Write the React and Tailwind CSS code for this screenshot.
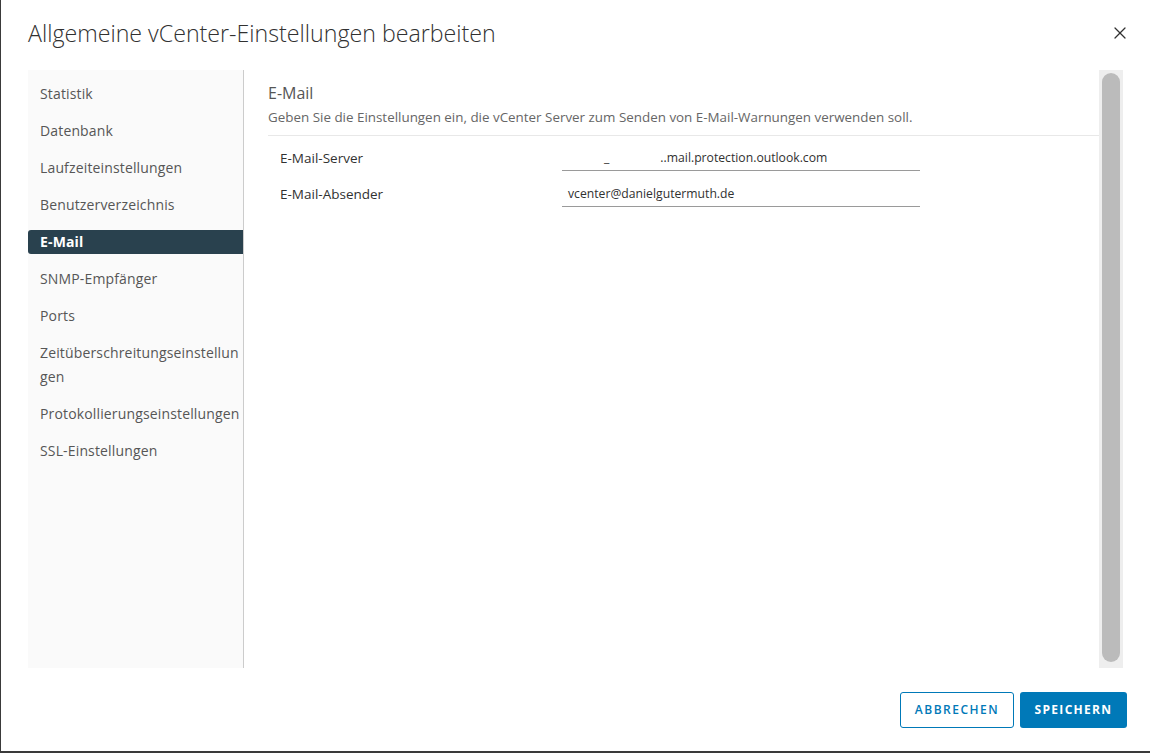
import { X } from 'lucide-react';

const navItems = [
  'Statistik',
  'Datenbank',
  'Laufzeiteinstellungen',
  'Benutzerverzeichnis',
  'E-Mail',
  'SNMP-Empfänger',
  'Ports',
  'Zeitüberschreitungseinstellun\ngen',
  'Protokollierungseinstellungen',
  'SSL-Einstellungen',
];

const font = { fontFamily: '"Open Sans", "Noto Sans", sans-serif' };

export default function App() {
  return (
    <div
      className="h-[753px] w-[1150px] bg-white border-l border-b-2 border-[#3a3a3a] flex flex-col overflow-hidden"
      style={font}
    >
      {/* Header */}
      <div className="h-[70px] flex items-start justify-between pl-[27px] pr-[20px] pt-[17px]">
        <h1 className="text-[23.2px] font-light text-[#313131] leading-[32px]">
          Allgemeine vCenter-Einstellungen bearbeiten
        </h1>
        <button className="mt-[6px] text-[#313131]">
          <X className="w-[20px] h-[20px]" strokeWidth={1.5} />
        </button>
      </div>

      {/* Body */}
      <div className="flex-1 flex min-h-0 pl-[27px] pr-[27px]">
        {/* Sidebar */}
        <div className="w-[216px] bg-[#fafafa] border-r border-[#cccccc] pt-[12px] flex flex-col gap-[13px]">
          {navItems.map((item) => {
            const active = item === 'E-Mail';
            return (
              <div
                key={item}
                className={`pl-[12px] text-[14px] leading-[24px] tracking-[0.15px] whitespace-pre-line ${
                  active
                    ? 'bg-[#29414e] text-white font-bold rounded-l-[3px]'
                    : 'text-[#565656]'
                }`}
              >
                {item}
              </div>
            );
          })}
        </div>

        {/* Content */}
        <div className="flex-1 flex flex-col pt-[12px]">
          <div className="pl-[24px]">
            <h2 className="text-[16px] leading-[22px] text-[#565656]">E-Mail</h2>
            <p className="text-[13.4px] leading-[20px] text-[#666666] mt-[3px]">
              Geben Sie die Einstellungen ein, die vCenter Server zum Senden von E-Mail-Warnungen verwenden soll.
            </p>
            <div className="mt-[8px] border-b border-[#e8e8e8]" />
          </div>
          <div className="pl-[36px] pt-[11px] flex flex-col gap-[12px]">
            <div className="flex items-start">
              <div className="w-[282px] text-[13.5px] leading-[22px] text-[#313131]">E-Mail-Server</div>
              <div className="w-[358px] h-[24px] border-b border-[#9a9a9a] pl-[6px] text-[12.2px] leading-[22px] text-[#313131]">
                <span className="ml-[36px]">_</span>
                <span className="ml-[51px]">..mail.protection.outlook.com</span>
              </div>
            </div>
            <div className="flex items-start">
              <div className="w-[282px] text-[13.5px] leading-[22px] text-[#313131]">E-Mail-Absender</div>
              <div className="w-[358px] h-[24px] border-b border-[#9a9a9a] pl-[6px] text-[12.2px] leading-[22px] text-[#313131]">
                vcenter@danielgutermuth.de
              </div>
            </div>
          </div>
        </div>

        {/* Scrollbar */}
        <div className="w-[24px] bg-[#eeeeee] px-[3px] py-[3px] flex">
          <div className="flex-1 bg-[#bbbbbb] rounded-full mb-[3px]" />
        </div>
      </div>

      {/* Footer */}
      <div className="h-[83px] flex items-start justify-end gap-[6px] pr-[23px] pt-[24px]">
        <button className="h-[36px] w-[114px] border border-[#0079b8] rounded-[3px] bg-white text-[#0079b8] text-[12px] font-semibold tracking-[1.5px]">
          ABBRECHEN
        </button>
        <button className="h-[36px] w-[107px] rounded-[3px] bg-[#0079b8] text-white text-[12px] font-bold tracking-[1.3px]">
          SPEICHERN
        </button>
      </div>
    </div>
  );
}
